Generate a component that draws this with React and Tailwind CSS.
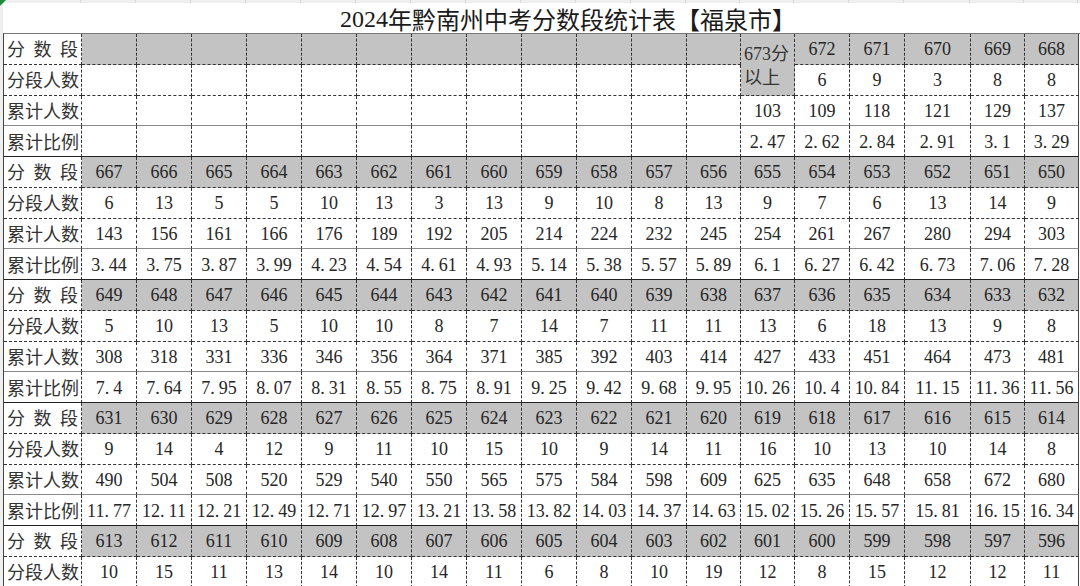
import React from "react";

const GRID = "grid grid-cols-[78px_repeat(11,55px)_54px_54px_55px_55px_66px_54px_54px]";

const groups = [
  {
    score: ["", "", "", "", "", "", "", "", "", "", "", "", "673分以上", "672", "671", "670", "669", "668"],
    count: ["", "", "", "", "", "", "", "", "", "", "", "", "6", "9", "3", "8", "8"],
    cum: ["", "", "", "", "", "", "", "", "", "", "", "", "103", "109", "118", "121", "129", "137"],
    pct: ["", "", "", "", "", "", "", "", "", "", "", "", "2.47", "2.62", "2.84", "2.91", "3.1", "3.29"],
  },
  {
    score: ["667", "666", "665", "664", "663", "662", "661", "660", "659", "658", "657", "656", "655", "654", "653", "652", "651", "650"],
    count: ["6", "13", "5", "5", "10", "13", "3", "13", "9", "10", "8", "13", "9", "7", "6", "13", "14", "9"],
    cum: ["143", "156", "161", "166", "176", "189", "192", "205", "214", "224", "232", "245", "254", "261", "267", "280", "294", "303"],
    pct: ["3.44", "3.75", "3.87", "3.99", "4.23", "4.54", "4.61", "4.93", "5.14", "5.38", "5.57", "5.89", "6.1", "6.27", "6.42", "6.73", "7.06", "7.28"],
  },
  {
    score: ["649", "648", "647", "646", "645", "644", "643", "642", "641", "640", "639", "638", "637", "636", "635", "634", "633", "632"],
    count: ["5", "10", "13", "5", "10", "10", "8", "7", "14", "7", "11", "11", "13", "6", "18", "13", "9", "8"],
    cum: ["308", "318", "331", "336", "346", "356", "364", "371", "385", "392", "403", "414", "427", "433", "451", "464", "473", "481"],
    pct: ["7.4", "7.64", "7.95", "8.07", "8.31", "8.55", "8.75", "8.91", "9.25", "9.42", "9.68", "9.95", "10.26", "10.4", "10.84", "11.15", "11.36", "11.56"],
  },
  {
    score: ["631", "630", "629", "628", "627", "626", "625", "624", "623", "622", "621", "620", "619", "618", "617", "616", "615", "614"],
    count: ["9", "14", "4", "12", "9", "11", "10", "15", "10", "9", "14", "11", "16", "10", "13", "10", "14", "8"],
    cum: ["490", "504", "508", "520", "529", "540", "550", "565", "575", "584", "598", "609", "625", "635", "648", "658", "672", "680"],
    pct: ["11.77", "12.11", "12.21", "12.49", "12.71", "12.97", "13.21", "13.58", "13.82", "14.03", "14.37", "14.63", "15.02", "15.26", "15.57", "15.81", "16.15", "16.34"],
  },
  {
    score: ["613", "612", "611", "610", "609", "608", "607", "606", "605", "604", "603", "602", "601", "600", "599", "598", "597", "596"],
    count: ["10", "15", "11", "13", "14", "10", "14", "11", "6", "8", "10", "19", "12", "8", "15", "12", "12", "11"],
  },
];

const LABELS = { score: "分数段", count: "分段人数", cum: "累计人数", pct: "累计比例" };

const BOTTOM = {
  score: "[border-bottom-style:dashed] border-b-[#333]",
  count: "[border-bottom-style:dashed] border-b-[#333]",
  cum: "[border-bottom-style:solid] border-b-[#8a8a8a]",
  pct: "[border-bottom-style:solid] border-b-[#222]",
};

function Num({ v }) {
  if (!v.includes(".")) return v;
  const [a, b] = v.split(".");
  return (
    <>
      {a}
      <span className="mr-[4px]">.</span>
      {b}
    </>
  );
}

function Label({ kind, bottom }) {
  const text = LABELS[kind];
  return (
    <div className={`h-full border-b border-r [border-right-style:dashed] border-r-[#333] ${bottom} flex items-center font-['Noto_Sans_CJK_SC',sans-serif] text-[18px] text-[#333]`}>
      {kind === "score" ? (
        <div className="flex w-full justify-between px-[3px]">
          <span>分</span>
          <span>数</span>
          <span>段</span>
        </div>
      ) : (
        <span className="pl-[3px]">{text}</span>
      )}
    </div>
  );
}

function Row({ kind, cells, last }) {
  const bottom = BOTTOM[kind];
  const gray = kind === "score";
  return (
    <>
      <Label kind={kind} bottom={bottom} />
      {cells.map((c, i) => {
        const isLast = i === cells.length - 1;
        const right = isLast
          ? "[border-right-style:solid] border-r-[#444]"
          : "[border-right-style:dashed] border-r-[#333]";
        if (c === "673分以上") {
          return (
            <div
              key={i}
              className={`row-span-2 bg-[#c3c3c3] border-b border-r ${right} [border-bottom-style:dashed] border-b-[#333] flex flex-col justify-center pl-[3px] font-['Liberation_Serif','Noto_Sans_CJK_SC',serif] text-[18px] leading-[22px] text-[#333]`}
            >
              <span>
                673<span className="font-['Noto_Sans_CJK_SC',sans-serif]">分</span>
              </span>
              <span className="font-['Noto_Sans_CJK_SC',sans-serif]">以上</span>
            </div>
          );
        }
        return (
          <div
            key={i}
            className={`h-full border-b border-r ${right} ${bottom} ${gray ? "bg-[#c3c3c3]" : "bg-white"} flex items-center justify-center pt-[2px] font-['Liberation_Serif',serif] text-[18px] text-[#262626] whitespace-nowrap`}
          >
            <Num v={c} />
          </div>
        );
      })}
    </>
  );
}

export default function App() {
  const rows = [];
  groups.forEach((g, gi) => {
    ["score", "count", "cum", "pct"].forEach((k) => {
      if (g[k]) rows.push({ key: `${gi}-${k}`, kind: k, cells: g[k] });
    });
  });

  return (
    <div className="relative w-[1080px] h-[586px] overflow-hidden bg-[#efefef]">
      <div className="absolute left-0 top-0 w-0 h-0 border-t-[6px] border-r-[6px] border-t-[#1f8a3a] border-r-transparent" />
      <div className={`${GRID} h-[3px] ml-[3px]`}>
        {Array.from({ length: 19 }).map((_, i) => (
          <div key={i} className="border-r border-r-[#d6d6d6]" />
        ))}
      </div>
      <div className="ml-[3px] w-[1077px] bg-white">
        <div className="h-[30px] flex items-center pl-[337px] pt-[1px] text-[24px] text-[#1a1a1a] font-['Liberation_Serif','Noto_Sans_CJK_SC',serif] whitespace-nowrap">
          2024<span className="font-['Noto_Sans_CJK_SC',sans-serif]">年黔南州中考分数段统计表【福泉市】</span>
        </div>
        <div className={`${GRID} auto-rows-[30.75px] border-l border-t border-l-[#444] border-t-[#777]`}>
          {rows.map((r) => (
            <Row key={r.key} kind={r.kind} cells={r.cells} />
          ))}
        </div>
      </div>
    </div>
  );
}
